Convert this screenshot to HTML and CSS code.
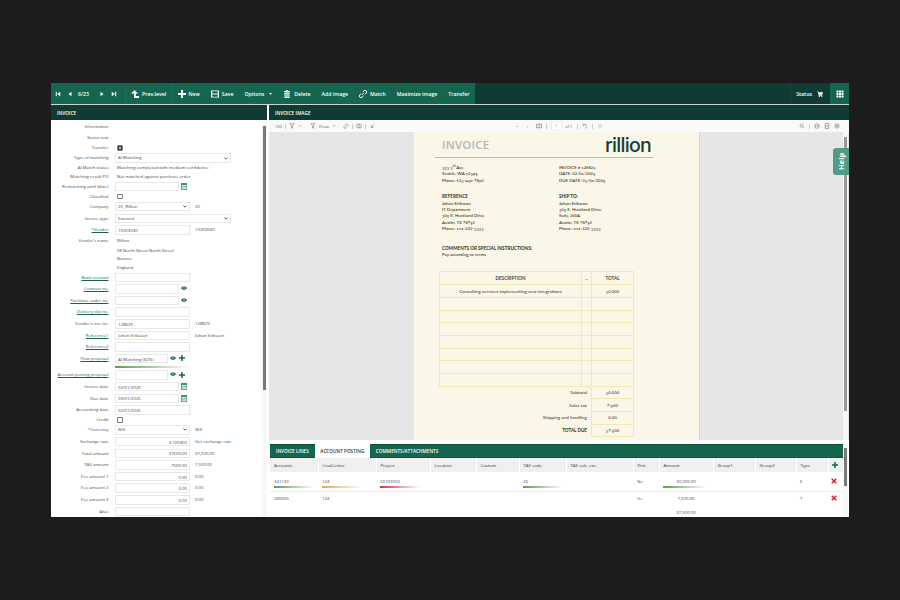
FILE: index.html
```html
<!DOCTYPE html>
<html lang="en">
<head>
<meta charset="UTF-8" />
<title>Invoice</title>
<link rel="stylesheet" href="styles.css">
</head>
<body>
<div class="app">
    <div class="toolbar">
        <div class="tool-main">
            <div class="pager">
                <svg class="ico" viewBox="0 0 8 8"><path d="M1 1h1.4v6H1zM7 1v6L3 4z"/></svg>
                <svg class="ico" viewBox="0 0 8 8"><path d="M6 1v6L2 4z"/></svg>
                <span class="page-no">6/23</span>
                <svg class="ico" viewBox="0 0 8 8"><path d="M2 1v6l4-3z"/></svg>
                <svg class="ico" viewBox="0 0 8 8"><path d="M7 1H5.6v6H7zM1 1v6l4-3z"/></svg>
            </div>
            <div class="tool-btn first"><svg class="ico" viewBox="0 0 8 8"><path d="M3.5 0 7 3.4H4.8V6H8v2H3V3.4H0z"/></svg>Prev.level</div>
            <div class="tool-btn"><svg class="ico" viewBox="0 0 8 8"><path d="M3 0h2v3h3v2H5v3H3V5H0V3h3z"/></svg>New</div>
            <div class="tool-btn"><svg class="ico" viewBox="0 0 8 8"><path d="M0 .5h8v7H0zM1.2 1.3v2.2h5.6V1.3zM1.2 4.6v2.2h5.6V4.6z" fill-rule="evenodd"/></svg>Save</div>
            <div class="tool-btn">Options<svg class="caret" viewBox="0 0 4 3"><path d="M0 0h4L2 3z"/></svg></div>
            <div class="tool-btn"><svg class="ico" viewBox="0 0 8 8"><path d="M3 0h2v1h2v1H1V1h2zM1.5 2.5h5V8h-5zM2.6 3.5v3.5h.8V3.5zM4.6 3.5v3.5h.8V3.5z" fill-rule="evenodd"/></svg>Delete</div>
            <div class="tool-btn">Add image</div>
            <div class="tool-btn"><svg class="ico" viewBox="0 0 8 8"><path d="M3.2 4.8 4.8 3.2M3.6 2 5 .8a1.5 1.5 0 0 1 2.2 2.2L6 4.4M2 3.6.8 5A1.5 1.5 0 0 0 3 7.2l1.4-1.2" fill="none" stroke="#fff" stroke-width="1"/></svg>Match</div>
            <div class="tool-btn">Maximize image</div>
            <div class="tool-btn">Transfer</div>
        </div>
        <div class="tool-right">
            <div class="status">Status<svg class="ico small" viewBox="0 0 8 8"><path d="M0 .5h1.8l.3 1H8L7 5H2.8l.2.8h4v.7H2.4L1.2 1.2H0z"/><circle cx="3" cy="7.2" r=".8"/><circle cx="6.4" cy="7.2" r=".8"/></svg></div>
            <div class="grid-btn"><svg class="ico" viewBox="0 0 8 8"><path d="M.5.5h2v2h-2zM3 .5h2v2H3zM5.5.5h2v2h-2zM.5 3h2v2h-2zM3 3h2v2H3zM5.5 3h2v2h-2zM.5 5.5h2v2h-2zM3 5.5h2v2H3zM5.5 5.5h2v2h-2z"/></svg></div>
        </div>
    </div>

    <div class="columns">
        <div class="left">
            <div class="bar">INVOICE</div>
            <div class="left-body">
                <div class="form">
                    <div class="row r10h"><label>Information</label></div>
                    <div class="row r10h"><label>Status text</label></div>
                    <div class="row r10"><label>Transfer</label><input type="checkbox" checked class="check"></div>
                    <div class="row r10"><label>Type of matching</label><div class="select long"><span>AI Matching</span><svg class="chev" viewBox="0 0 6 4"><path d="M.6.6 3 3l2.4-2.4" /></svg></div></div>
                    <div class="row r9"><label>AI Match status</label><span class="val">Matching completed with medium confidence</span></div>
                    <div class="row r10"><label>Matching result PO</label><span class="val">Not matched against purchase order</span></div>
                    <div class="row r10"><label>Rematching until (date)</label><input class="field short" type="text"><svg class="cal" viewBox="0 0 6 7"><use href="#cal"/></svg></div>
                    <div class="row r10"><label>Classified</label><input type="checkbox" class="check"></div>
                    <div class="row r12"><label>Company</label><div class="select"><span>20, Rillion</span><svg class="chev" viewBox="0 0 6 4"><path d="M.6.6 3 3l2.4-2.4" /></svg></div><span class="after">20</span></div>
                    <div class="row r12"><label>Invoice type</label><div class="select long"><span>External</span><svg class="chev" viewBox="0 0 6 4"><path d="M.6.6 3 3l2.4-2.4" /></svg></div></div>
                    <div class="row r10h"><label class="link">*Vendor</label><input class="field" type="text" value="10203040"><span class="after">10203040</span></div>
                    <div class="row r10"><label>Vendor's name</label><span class="val">Rillion</span></div>
                    <div class="row r8"><label></label><span class="val">58 North Street North Street</span></div>
                    <div class="row r8"><label></label><span class="val">Bourne</span></div>
                    <div class="row r10"><label></label><span class="val">England</span></div>
                    <div class="row r12"><label class="link">Bank account</label><input class="field" type="text"></div>
                    <div class="row r12"><label class="link">Contract no.</label><input class="field short" type="text"><svg class="eye" viewBox="0 0 8 5"><use href="#eye"/></svg></div>
                    <div class="row r12"><label class="link">Purchase order no.</label><input class="field short" type="text"><svg class="eye" viewBox="0 0 8 5"><use href="#eye"/></svg></div>
                    <div class="row r12"><label class="link">Delivery slip no.</label><input class="field" type="text"></div>
                    <div class="row r12"><label>Vendor's inv. no.</label><input class="field" type="text" value="128829"><span class="after">128829</span></div>
                    <div class="row r12"><label class="link">Reference1</label><input class="field" type="text" value="Johan Eriksson"><span class="after">Johan Eriksson</span></div>
                    <div class="row r12"><label class="link">Reference2</label><input class="field" type="text"></div>
                    <div class="row r12"><label class="link">Flow proposal</label><input class="field tiny" type="text" value="AI Matching (82%)"><svg class="eye" viewBox="0 0 8 5"><use href="#eye"/></svg><svg class="plus" viewBox="0 0 8 8"><use href="#plus"/></svg></div>
                    <div class="flow-bar"></div>
                    <div class="row r12"><label class="link">Account posting proposal</label><input class="field tiny" type="text"><svg class="eye" viewBox="0 0 8 5"><use href="#eye"/></svg><svg class="plus" viewBox="0 0 8 8"><use href="#plus"/></svg></div>
                    <div class="row r12"><label>Invoice date</label><input class="field short" type="text" value="02/01/2025"><svg class="cal" viewBox="0 0 6 7"><use href="#cal"/></svg></div>
                    <div class="row r12"><label>Due date</label><input class="field short" type="text" value="03/01/2025"><svg class="cal" viewBox="0 0 6 7"><use href="#cal"/></svg></div>
                    <div class="row r10"><label>Accounting date</label><input class="field" type="text" value="02/01/2025"></div>
                    <div class="row r10"><label>Credit</label><input type="checkbox" class="check"></div>
                    <div class="row r12"><label>*Currency</label><div class="select"><span>SEK</span><svg class="chev" viewBox="0 0 6 4"><path d="M.6.6 3 3l2.4-2.4" /></svg></div><span class="after">SEK</span></div>
                    <div class="row r12"><label>Exchange rate</label><input class="field num" type="text" value="0.100400"><span class="after green">Get exchange rate</span></div>
                    <div class="row r12"><label>Total amount</label><input class="field num" type="text" value="37500.00"><span class="after">37,500.00</span></div>
                    <div class="row r12"><label>TAX amount</label><input class="field num" type="text" value="7500.00"><span class="after">7,500.00</span></div>
                    <div class="row r12"><label>Fee amount 1</label><input class="field num" type="text" value="0.00"><span class="after">0.00</span></div>
                    <div class="row r12"><label>Fee amount 2</label><input class="field num" type="text" value="0.00"><span class="after">0.00</span></div>
                    <div class="row r12"><label>Fee amount 3</label><input class="field num" type="text" value="0.00"><span class="after">0.00</span></div>
                    <div class="row r12"><label>Alias</label><input class="field" type="text"></div>
                </div>
                <div class="scroll left-scroll"><div class="thumb"></div></div>
            </div>
        </div>

        <div class="right">
            <div class="bar">INVOICE IMAGE</div>
            <div class="pdf-tools">
                <span class="pdf-txt">100</span>
                <i class="sep"></i>
                <svg class="pdf-ico" viewBox="0 0 8 8"><path d="M1 1h6L4.6 4v3L3.4 6.4V4z"/></svg>
                <svg class="pdf-caret" viewBox="0 0 6 4"><path d="M1 1h4"/></svg>
                <svg class="pdf-ico gap-l" viewBox="0 0 8 8"><path d="M1 1h6L4.6 4v3L3.4 6.4V4z"/></svg>
                <span class="pdf-txt">Draw</span>
                <svg class="pdf-caret" viewBox="0 0 6 4"><path d="M1 1h4"/></svg>
                <svg class="pdf-ico gap-s" viewBox="0 0 8 8"><path d="M1 5 5 1l2 2-4 4H2z"/></svg>
                <i class="sep"></i>
                <svg class="pdf-ico" viewBox="0 0 8 8"><rect x="1" y="1.5" width="6" height="5" rx="1.5"/><path d="M4 1.5v5"/></svg>
                <i class="sep"></i>
                <span class="pdf-txt font-size">A<sup>^</sup></span>
                <div class="pdf-mid">
                    <span class="pdf-txt">&minus;</span>
                    <span class="pdf-txt plus-txt">+</span>
                    <svg class="pdf-ico fit" viewBox="0 0 8 8"><rect x="1" y="1.5" width="6" height="5"/><path d="M4 1.5v5"/></svg>
                    <i class="sep"></i>
                    <span class="page-box">1</span>
                    <span class="pdf-txt">of 1</span>
                    <i class="sep"></i>
                    <svg class="pdf-ico" viewBox="0 0 8 8"><path d="M2 2.5A2.6 2.6 0 1 1 4 7M1.5 1v2h2"/></svg>
                    <i class="sep"></i>
                    <svg class="pdf-ico faded" viewBox="0 0 8 8"><circle cx="4" cy="4" r="2.6"/><path d="M4 2.5V4h1.2"/></svg>
                </div>
                <div class="pdf-end">
                    <svg class="pdf-ico" viewBox="0 0 8 8"><circle cx="3.4" cy="3.4" r="2"/><path d="m5 5 2 2"/></svg>
                    <i class="sep"></i>
                    <svg class="pdf-ico" viewBox="0 0 8 8"><circle cx="4" cy="4" r="3"/><path d="M1 4h6"/></svg>
                    <svg class="pdf-ico" viewBox="0 0 8 8"><rect x="1.5" y="1" width="5" height="6"/><path d="M1.5 4h5"/></svg>
                    <svg class="pdf-ico" viewBox="0 0 8 8"><circle cx="4" cy="4" r="2.8"/><circle cx="4" cy="4" r="1"/></svg>
                </div>
            </div>
            <div class="viewer">
                <div class="viewer-main">
                    <div class="sheet">
                        <div class="inv-top">
                            <span class="inv-title">INVOICE</span>
                            <span class="logo">rillion</span>
                        </div>
                        <div class="inv-cols">
                            <div>
                                <p>333 3<sup>rd</sup> Ave<br>Seattle, WA 12345<br>Phone: 123-456-7890</p>
                                <p><span class="caps">REFERENCE</span><br>Johan Eriksson<br>IT Department<br>305 E. Huntland Drive<br>Austin, TX 78752<br>Phone: 111-222-3333</p>
                            </div>
                            <div>
                                <p>INVOICE # 128829<br>DATE: 02/01/2025<br>DUE DATE: 03/01/2025</p>
                                <p><span class="caps">SHIP TO:</span><br>Johan Eriksson<br>305 E. Huntland Drive<br>Suite 200A<br>Austin, TX 78752<br>Phone: 111-222-3333</p>
                            </div>
                        </div>
                        <p class="inv-comments"><span class="caps">COMMENTS OR SPECIAL INSTRUCTIONS:</span><br>Pay according to terms</p>
                        <table class="inv-table">
                            <tr><th>DESCRIPTION</th><th class="dash">..</th><th class="total">TOTAL</th></tr>
                            <tr><td class="center">Consulting services implementing new integrations</td><td></td><td class="total">30.000</td></tr>
                            <tr><td></td><td></td><td></td></tr>
                            <tr><td></td><td></td><td></td></tr>
                            <tr><td></td><td></td><td></td></tr>
                            <tr><td></td><td></td><td></td></tr>
                            <tr><td></td><td></td><td></td></tr>
                            <tr><td></td><td></td><td></td></tr>
                            <tr><td></td><td></td><td></td></tr>
                            <tr class="sum"><td colspan="2">Subtotal</td><td class="total">30.000</td></tr>
                            <tr class="sum"><td colspan="2">Sales tax</td><td class="total">7.500</td></tr>
                            <tr class="sum"><td colspan="2">Shipping and handling</td><td class="total">0.00</td></tr>
                            <tr class="sum due"><td colspan="2">TOTAL DUE</td><td class="total">37.500</td></tr>
                        </table>
                    </div>
                </div>
                <div class="scroll viewer-scroll"><div class="thumb"></div></div>
            </div>
            <div class="lines">
                <div class="lines-main">
                    <div class="tabs">
                        <div class="tab">INVOICE LINES</div>
                        <div class="tab active">ACCOUNT POSTING</div>
                        <div class="tab">COMMENTS/ATTACHMENTS</div>
                    </div>
                    <table class="postings">
                        <colgroup>
                            <col class="c48"><col class="c58"><col class="c54"><col class="c46"><col class="c43"><col class="c47"><col class="c67"><col class="c26"><col class="c54"><col class="c42"><col class="c41"><col class="c32"><col class="c15">
                        </colgroup>
                        <tr class="head">
                            <th>Accounts</th><th>CostCenter</th><th>Project</th><th>Location</th><th>Custom</th><th>TAX code</th><th>TAX calc. exc.</th><th>Dist</th><th>Amount</th><th>Group1</th><th>Group2</th><th>Type</th>
                            <th class="add"><svg class="plus" viewBox="0 0 8 8"><use href="#plus"/></svg></th>
                        </tr>
                        <tr class="tall">
                            <td><span class="cell">341130</span><i class="score good"></i></td>
                            <td><span class="cell">124</span><i class="score mid"></i></td>
                            <td><span class="cell">20102003</span><i class="score bad"></i></td>
                            <td></td><td></td>
                            <td><span class="cell">26</span><i class="score good"></i></td>
                            <td></td>
                            <td><span class="cell teal">No</span></td>
                            <td class="amount"><span class="cell">30,000.00</span><i class="score good wide-score"></i></td>
                            <td></td><td></td>
                            <td class="type"><span class="cell">E</span></td>
                            <td><svg class="del" viewBox="0 0 8 8"><path d="M1 1l6 6M7 1 1 7"/></svg></td>
                        </tr>
                        <tr class="short-row">
                            <td>266900</td><td>124</td><td></td><td></td><td></td><td></td><td></td>
                            <td class="grey">No</td>
                            <td class="amount">7,500.00</td>
                            <td></td><td></td>
                            <td class="type">T</td>
                            <td><svg class="del" viewBox="0 0 8 8"><path d="M1 1l6 6M7 1 1 7"/></svg></td>
                        </tr>
                        <tr class="sum-row">
                            <td colspan="8"></td>
                            <td class="amount">37,500.00</td>
                            <td colspan="4"></td>
                        </tr>
                    </table>
                </div>
                <div class="scroll lines-scroll"><div class="thumb"></div></div>
            </div>
            <div class="help">Help</div>
        </div>
    </div>
</div>

<svg class="defs" width="0" height="0">
    <symbol id="eye" viewBox="0 0 8 5"><path d="M0 2.5C1.5.6 2.8 0 4 0s2.5.6 4 2.5C6.5 4.4 5.2 5 4 5S1.5 4.4 0 2.5z" fill="#14654f"/><circle cx="4" cy="2.5" r="1" fill="#fff"/></symbol>
    <symbol id="plus" viewBox="0 0 8 8"><path d="M3 0h2v3h3v2H5v3H3V5H0V3h3z" fill="#14654f"/></symbol>
    <symbol id="cal" viewBox="0 0 6 7"><path d="M0 0h6v7H0z" fill="#3f8f76"/><path d="M.7 2h4.6v4.3H.7z" fill="#e4f0ec"/><path d="M1.2 3h1v.8h-1zM2.7 3h1v.8h-1zM4 3h.9v.8H4zM1.2 4.5h1v.8h-1zM2.7 4.5h1v.8h-1z" fill="#3f8f76"/></symbol>
</svg>
</body>
</html>
```

FILE: styles.css
```css
* {
    box-sizing: border-box;
}
body {
    margin: 0;
    height: 600px;
    overflow: hidden;
    background-color: #1c1c1c;
    font-family: "Open Sans", "Liberation Sans", sans-serif;
    font-size: 4.3px;
    color: #3f3f3f;
    padding: 83px 51px 0;
}
.app {
    width: 798px;
    height: 434px;
    background-color: #fff;
    overflow: hidden;
    display: flex;
    flex-direction: column;
}
.defs {
    position: absolute;
}

/* top toolbar */
.toolbar {
    display: flex;
    height: 21px;
    flex: none;
    background-color: #0f3b34;
    color: #fff;
    font-weight: 600;
    font-size: 5.2px;
}
.ico {
    width: 6px;
    height: 6px;
    fill: #fff;
    flex: none;
}
.tool-btn .ico, .grid-btn .ico {
    width: 8px;
    height: 8px;
}
.tool-main {
    display: flex;
    align-items: center;
    width: 424px;
    background-color: #15654f;
}
.pager {
    display: flex;
    align-items: center;
    width: 75px;
    height: 100%;
    padding-left: 4px;
    border-right: 1px solid #1a6f58;
}
.pager .ico {
    margin-right: 6px;
}
.page-no {
    width: 16px;
    margin-left: -1px;
    margin-right: 5px;
}
.tool-btn {
    display: flex;
    align-items: center;
    gap: 3px;
    padding: 0 5.5px;
    height: 100%;
    white-space: nowrap;
}
.tool-btn.first {
    padding-left: 5px;
    padding-right: 0;
    border-right: 1px solid #1a6f58;
    width: 46px;
}
.caret {
    width: 3px;
    height: 2px;
    fill: #fff;
    margin-left: 2px;
}
.tool-right {
    flex: 1;
    display: flex;
    justify-content: flex-end;
}
.status {
    display: flex;
    align-items: center;
    gap: 5px;
    padding: 0 7px 0 5px;
    border-left: 1px solid #15483f;
}
.grid-btn {
    width: 19px;
    display: flex;
    align-items: center;
    justify-content: center;
    background-color: #15654f;
}

/* panels */
.columns {
    flex: 1;
    display: flex;
    gap: 2px;
    min-height: 0;
    border-top: 1px solid #c9d3cf;
}
.bar {
    height: 15px;
    flex: none;
    display: flex;
    align-items: center;
    padding-left: 6px;
    background-color: #0f3b34;
    color: #fff;
    font-weight: 600;
    font-size: 4.8px;
}
.left {
    width: 216px;
    display: flex;
    flex-direction: column;
    flex: none;
}
.left-body {
    flex: 1;
    display: flex;
    min-height: 0;
    overflow: hidden;
}
.form {
    flex: 1;
    padding-top: 2.25px;
}
.row {
    display: flex;
    align-items: flex-start;
    white-space: nowrap;
    line-height: 9.5px;
}
.row.r8 { height: 8.4px; }
.row.r9 { height: 8.7px; }
.row.r10 { height: 10px; }
.row.r10h { height: 10.5px; }
.row.r12 { height: 11.65px; }
.row label {
    width: 57.5px;
    flex: none;
    text-align: right;
    margin-right: 6.5px;
    color: #484848;
}
.row label.link {
    color: #14654f;
    text-decoration: underline;
}
.val {
    padding-left: 2px;
}
.field, .select {
    width: 75px;
    height: 9.5px;
    border: 1px solid #e8e8e8;
    background-color: #fff;
    font-family: inherit;
    font-size: 4.3px;
    color: #3f3f3f;
    padding: 0 2px;
    outline: none;
}
.field.short { width: 64px; }
.field.tiny { width: 53px; }
.field.num { text-align: right; }
.select {
    display: flex;
    align-items: center;
    justify-content: space-between;
}
.select.long { width: 116px; }
.chev {
    width: 4px;
    height: 3px;
    fill: none;
    stroke: #333;
    stroke-width: 1.2;
}
.after {
    margin-left: 5px;
}
.after.green {
    color: #14654f;
}
.check {
    appearance: none;
    width: 5.5px;
    height: 5.5px;
    margin: 2px 0 0 2px;
    border: 0.8px solid #777;
    border-radius: 1px;
    background-color: #fff;
}
.check:checked {
    background: radial-gradient(#bbb 20%, #444 60%);
}
.cal {
    width: 6px;
    height: 7px;
    margin: 1px 0 0 2px;
}
.eye {
    width: 6px;
    height: 4px;
    margin: 2px 0 0 2px;
}
.plus {
    width: 6px;
    height: 6px;
    margin: 1.5px 0 0 3px;
}
.flow-bar {
    width: 75px;
    height: 2px;
    margin: 0.7px 0 2px 64px;
    background: linear-gradient(to right, #5c9c4c, #fff);
}
.scroll {
    width: 5px;
    flex: none;
    background-color: #f7f7f7;
}
.thumb {
    width: 3px;
    margin: 0 auto;
    background-color: #7a7a7a;
}
.left-scroll .thumb {
    height: 264px;
    margin-top: 6px;
}

/* pdf viewer */
.right {
    flex: 1;
    display: flex;
    flex-direction: column;
    min-width: 0;
    position: relative;
}
.pdf-tools {
    height: 12px;
    flex: none;
    display: flex;
    align-items: center;
    gap: 3px;
    padding-left: 6px;
    background-color: #f9f9f9;
    color: #666;
}
.pdf-txt {
    font-size: 4px;
    white-space: nowrap;
}
.pdf-txt sup {
    font-size: 3px;
    line-height: 0;
}
.font-size {
    margin-left: 2px;
}
.pdf-ico {
    width: 6px;
    height: 6px;
    fill: none;
    stroke: #666;
    stroke-width: 0.7;
    flex: none;
}
.pdf-ico.faded {
    stroke: #bbb;
}
.pdf-ico.gap-l {
    margin-left: 5px;
}
.pdf-ico.gap-s {
    margin-left: 4px;
}
.pdf-ico.fit {
    margin-left: 3px;
}
.pdf-caret {
    width: 4px;
    height: 3px;
    stroke: #888;
    stroke-width: 0.8;
}
.sep {
    width: 1px;
    height: 5px;
    background-color: #ccc;
}
.pdf-mid {
    display: flex;
    align-items: center;
    gap: 4px;
    margin-left: 138px;
}
.plus-txt {
    margin-left: 4px;
}
.page-box {
    width: 11px;
    height: 10px;
    background-color: #fff;
    border: 1px solid #eee;
    text-align: center;
    font-size: 4px;
    line-height: 8px;
}
.pdf-end {
    margin-left: auto;
    margin-right: 9px;
    display: flex;
    align-items: center;
    gap: 4px;
}
.viewer {
    height: 308px;
    flex: none;
    display: flex;
    background-color: #e6e6e6;
    overflow: hidden;
}
.viewer-main {
    flex: 1;
    display: flex;
    padding-left: 145px;
}
.viewer-scroll {
    margin-right: 1px;
}
.viewer-scroll .thumb {
    height: 274px;
    margin-top: 5px;
    background-color: #999;
}
.sheet {
    width: 286px;
    height: 308px;
    background-color: #faf7e9;
    padding: 0 46px 0 21px;
    font-family: Lato, "Open Sans", sans-serif;
    font-variant-numeric: oldstyle-nums;
    color: #33321a;
    font-size: 4.4px;
    font-weight: 500;
    line-height: 6.4px;
    border-right: 1px solid #d4d4d4;
}
.sheet p {
    margin: 0;
}
.sheet sup {
    font-size: 3px;
    line-height: 0;
}
.caps {
    font-size: 4.65px;
    font-weight: 700;
}
.inv-top {
    height: 26px;
    display: flex;
    justify-content: space-between;
    align-items: center;
    padding: 1px 0 0 7px;
    border-bottom: 1.5px solid #b9b9b3;
}
.inv-title {
    font-family: "Open Sans", sans-serif;
    font-size: 11.5px;
    font-weight: 600;
    color: #b5b5b2;
    letter-spacing: 0.2px;
}
.logo {
    font-family: Inter, "Open Sans", sans-serif;
    font-size: 19.5px;
    font-weight: 500;
    color: #123c38;
    line-height: 20px;
    margin-right: 2px;
    letter-spacing: -0.7px;
}
.inv-cols {
    display: grid;
    grid-template-columns: 117px 1fr;
    padding: 7px 0 0 7px;
}
.inv-cols p + p {
    margin-top: 9px;
}
.inv-comments {
    padding: 12px 0 0 7px;
}
.inv-table {
    border-collapse: collapse;
    table-layout: fixed;
    width: 194px;
    margin: 13px 0 0 4px;
}
.inv-table th, .inv-table td {
    border: 1px solid #f2e8b0;
    height: 12.7px;
    padding: 0 1px;
    text-align: center;
    font-size: 4.6px;
    font-weight: 400;
    line-height: 5px;
}
.inv-table th {
    font-weight: 600;
}
.inv-table th:first-child { width: 142px; }
.inv-table .dash { width: 10px; }
.inv-table .total { width: 42px; }
.inv-table .sum td:first-child {
    border: none;
    border-right: 1px solid #f2e8b0;
    text-align: right;
    padding-right: 4px;
}
.inv-table .due td {
    font-weight: 700;
}
.inv-table .due td.total {
    font-weight: 400;
}

/* posting table */
.lines {
    flex: 1;
    display: flex;
    padding: 4px 1px 0;
    min-height: 0;
    overflow: hidden;
}
.lines-main {
    flex: 1;
    min-width: 0;
}
.lines-scroll .thumb {
    height: 38px;
    margin-top: 4px;
}
.tabs {
    display: flex;
    height: 14px;
    background-color: #16654f;
    border-top: 1px solid #0f4d3c;
    border-bottom: 1px solid #0f4d3c;
    color: #fff;
    font-weight: 600;
    font-size: 4.7px;
}
.tab {
    display: flex;
    align-items: center;
    padding: 0 6px;
}
.tab.active {
    background-color: #fff;
    color: #333;
    margin: -1px 0;
    padding: 0 5.5px;
}
.postings {
    border-collapse: collapse;
    table-layout: fixed;
    width: 573px;
}
.c48 { width: 48px; } .c58 { width: 58px; } .c54 { width: 54px; }
.c46 { width: 46px; } .c43 { width: 43px; } .c47 { width: 47px; }
.c67 { width: 67px; } .c26 { width: 26px; } .c42 { width: 42px; }
.c41 { width: 41px; } .c32 { width: 32px; } .c15 { width: 15px; }
.postings th {
    height: 14px;
    background-color: #efefef;
    border-right: 1px solid #fff;
    text-align: left;
    font-weight: 400;
    color: #333;
    padding: 0 4px;
    white-space: nowrap;
}
.postings .add {
    padding: 0;
}
.postings .add .plus {
    margin: 0 0 0 3px;
    display: block;
}
.postings td {
    padding: 0 4px;
    vertical-align: middle;
    white-space: nowrap;
}
.tall td {
    height: 19px;
    border-bottom: 1px solid #eee;
    vertical-align: top;
    padding-top: 6px;
}
.short-row td {
    height: 14px;
}
.sum-row td {
    height: 14px;
}
.cell {
    display: block;
    line-height: 6px;
}
.score {
    display: block;
    width: 40px;
    height: 2px;
    margin-top: 1.5px;
}
.score.good { background: linear-gradient(to right, #5c9c4c, #fff); }
.score.mid { background: linear-gradient(to right, #e5a64a, #fff); }
.score.bad { background: linear-gradient(to right, #bb3a4a, #fff); }
.postings td.amount {
    text-align: center;
    padding: 0;
}
.tall td.amount {
    padding: 6px 4px 0;
}
.wide-score {
    width: 44px;
}
.teal { color: #14654f; }
.grey { color: #888; }
.del {
    display: block;
    width: 6px;
    height: 6px;
    margin-left: -1px;
    fill: none;
    stroke: #d9212b;
    stroke-width: 2;
}

/* help tab */
.help {
    position: absolute;
    right: 0;
    top: 43px;
    width: 16px;
    height: 27px;
    background-color: #4f9d85;
    border-radius: 0 3px 3px 0;
    color: #fff;
    font-weight: 700;
    font-size: 7.5px;
    writing-mode: vertical-rl;
    transform: rotate(180deg);
    text-align: center;
    line-height: 16px;
}
```
